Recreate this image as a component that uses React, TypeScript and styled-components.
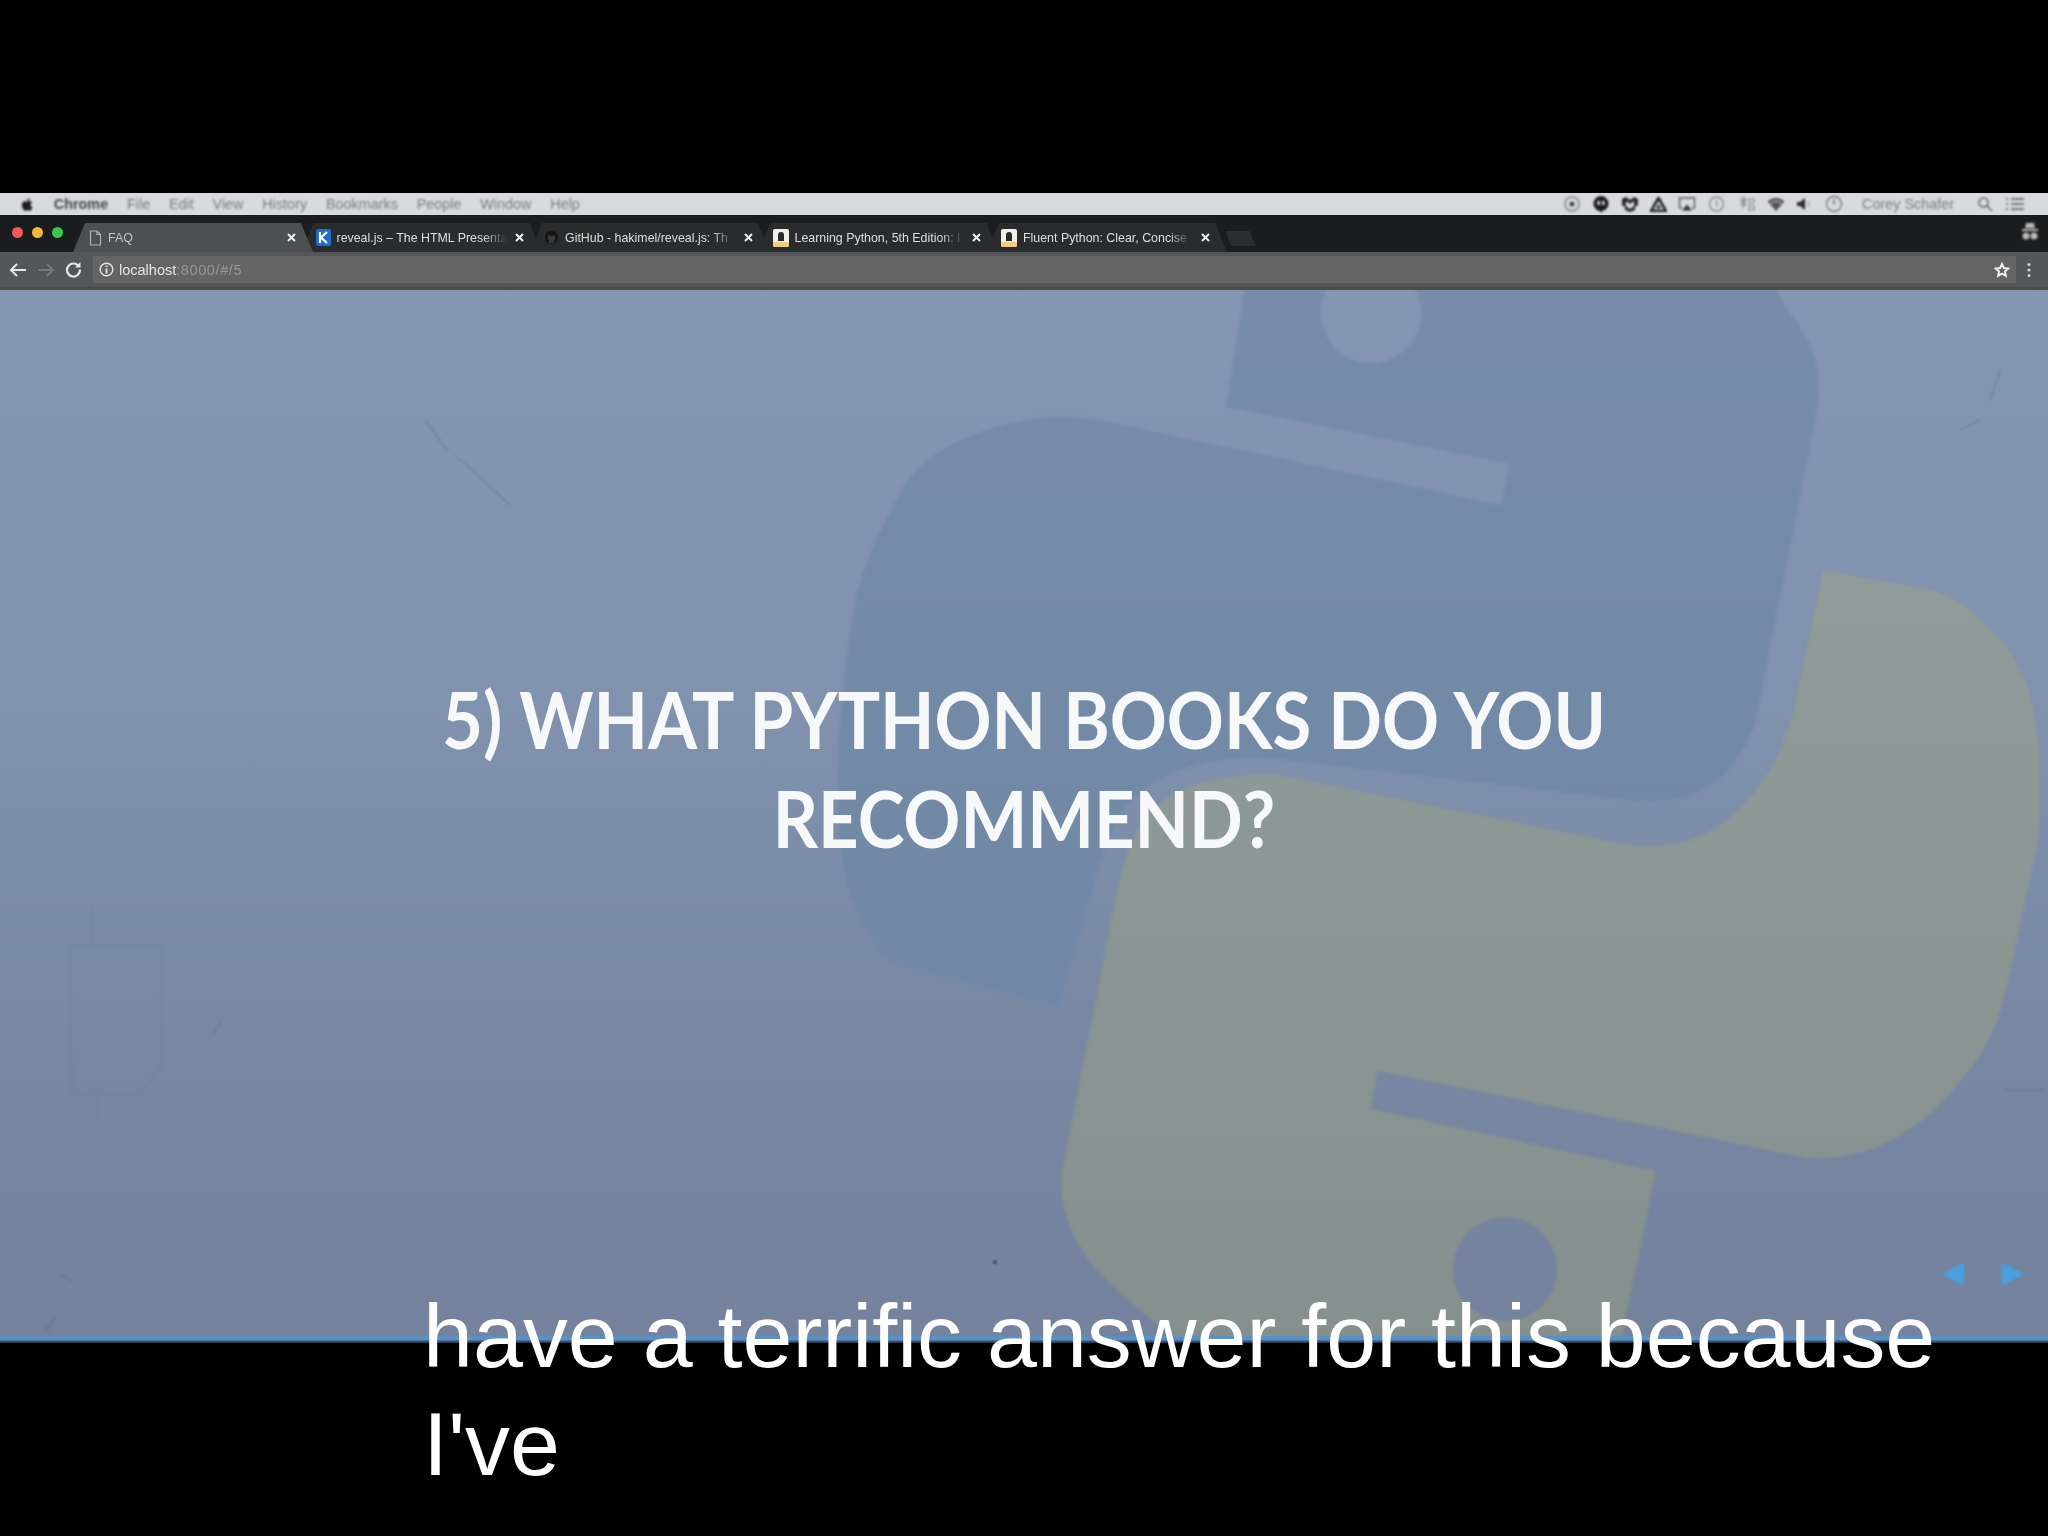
import React from 'react';
import styled, { createGlobalStyle } from 'styled-components';

const Global = createGlobalStyle`
  html, body { margin: 0; padding: 0; background: #000; }
  * { box-sizing: border-box; }
`;

const Page = styled.div`
  position: relative;
  width: 2048px;
  height: 1536px;
  display: flex;
  flex-direction: column;
  background: #000;
  overflow: hidden;
  font-family: "Liberation Sans", Arial, sans-serif;
`;
const Letterbox = styled.div<{ $h: number }>`
  height: ${(p) => p.$h}px;
  flex: none;
  background: #000;
`;
const MenuBar = styled.div`
  height: 22px;
  flex: none;
  display: flex;
  align-items: center;
  padding: 0 23px 0 20px;
  background: #d8dade;
  color: #797c80;
  font-size: 14.4px;
`;
const MenuBlur = styled.div`
  display: flex;
  align-items: center;
  filter: blur(0.8px);
`;
const MenuLeft = styled(MenuBlur)`
  gap: 18.800px;
`;
const AppName = styled.span`
  font-weight: 700;
  color: #45474a;
`;
const MenuRight = styled(MenuBlur)`
  margin-left: auto;
  gap: 11px;
  color: #555;
`;
const UserName = styled.span`
  margin: 0 12px 0 8px;
  color: #797c80;
`;
const TabStrip = styled.div`
  height: 37px;
  flex: none;
  display: flex;
  align-items: flex-end;
  background: #1b1c1e;
  position: relative;
`;
const Lights = styled.div`
  width: 73px;
  height: 100%;
  flex: none;
  display: flex;
  align-items: center;
  gap: 9px;
  padding: 0 0 2px 12px;
  filter: blur(0.7px);
`;
const Light = styled.span<{ $c: string }>`
  width: 11px;
  height: 11px;
  border-radius: 50%;
  background: ${(p) => p.$c};
`;
const Tab = styled.div<{ $active?: boolean }>`
  width: 240px;
  height: 29px;
  flex: none;
  margin-right: -11.500px;
  display: flex;
  align-items: center;
  gap: 6px;
  padding: 0 15px 0 ${(p) => (p.$active ? 16 : 14)}px;
  clip-path: polygon(0 100%, 5% 0, 95% 0, 100% 100%);
  background: ${(p) => (p.$active ? '#4e4f51' : '#2a2b2d')};
  color: #e4e4e4;
  font-size: 12.400px;
  position: relative;
  z-index: ${(p) => (p.$active ? 2 : 1)};
`;
const TabTitle = styled.span<{ $active?: boolean }>`
  flex: 1;
  overflow: hidden;
  white-space: nowrap;
  filter: blur(0.7px);
  color: ${(p) => (p.$active ? '#c4c4c4' : '#dedede')};
  mask-image: linear-gradient(90deg, #000 86%, transparent 100%);
`;
const TabClose = styled.span`
  flex: none;
  width: 14px;
  display: flex;
  justify-content: center;
  filter: blur(0.5px);
`;
const NewTab = styled.div`
  width: 30px;
  height: 15px;
  flex: none;
  margin: 0 0 6px 10px;
  clip-path: polygon(0 0, 80% 0, 100% 100%, 20% 100%);
  background: #2c2d2f;
  filter: blur(0.5px);
`;
const Incognito = styled.div`
  position: absolute;
  right: 9px;
  top: 7px;
  filter: blur(0.8px);
`;
const Toolbar = styled.div`
  height: 38px;
  flex: none;
  display: flex;
  align-items: center;
  padding: 0 6px 0 9px;
  background: #555658;
  border-bottom: 3px solid #4c4c4e;
`;
const NavIcons = styled.div`
  width: 84px;
  flex: none;
  display: flex;
  align-items: center;
  gap: 10px;
  filter: blur(0.6px);
`;
const Omnibox = styled.div`
  flex: 1;
  height: 27px;
  display: flex;
  align-items: center;
  gap: 5px;
  padding: 0 6px;
  background: #646464;
  font-size: 14.500px;
  color: #e6e6e6;
`;
const UrlIcon = styled.span`
  display: flex;
  filter: blur(0.6px);
`;
const Url = styled.span`
  filter: blur(0.6px);
`;
const UrlDim = styled.span`
  color: #979797;
  letter-spacing: 0.6px;
`;
const StarBox = styled.span`
  margin-left: auto;
  display: flex;
  filter: blur(0.6px);
`;
const MoreBox = styled.div`
  width: 26px;
  flex: none;
  display: flex;
  justify-content: center;
  filter: blur(0.6px);
`;
const Slide = styled.div`
  height: 1046px;
  flex: none;
  position: relative;
  display: flex;
  align-items: center;
  justify-content: center;
  padding-bottom: 88px;
  overflow: hidden;
  background: linear-gradient(180deg, #8596b2 0%, #8092ae 40%, #7888a3 70%, #74829e 100%);
`;
const Backdrop = styled.svg`
  position: absolute;
  left: 0;
  top: 0;
  width: 2048px;
  height: 1046px;
`;
const Title = styled.h1`
  position: relative;
  margin: 0;
  width: 1500px;
  text-align: center;
  color: #f7f8fa;
  font-family: Lato, "Noto Sans", sans-serif;
  font-weight: 700;
  font-size: 78px;
  line-height: 99px;
  transform: scaleX(0.906);
  filter: blur(0.6px);
`;
const Arrows = styled.div`
  position: absolute;
  right: 24px;
  bottom: 50px;
  display: flex;
  gap: 38px;
  filter: blur(0.8px);
`;
const Arrow = styled.span<{ $dir: 'left' | 'right' }>`
  width: 0;
  height: 0;
  border-top: 12px solid transparent;
  border-bottom: 12px solid transparent;
  ${(p) =>
    p.$dir === 'left'
      ? 'border-right: 22px solid #4a9fe0;'
      : 'border-left: 22px solid #4a9fe0;'}
`;
const Progress = styled.div`
  height: 7px;
  flex: none;
  background: #1c2430;
  filter: blur(0.6px);
`;
const ProgressFill = styled.div`
  height: 100%;
  background: linear-gradient(180deg, #5c8fc2 0, #5c8fc2 50%, #1c2a3a 100%);
`;
const Caption = styled.div`
  position: absolute;
  left: 423px;
  top: 1282px;
  width: 1560px;
  color: #fff;
  font-family: "Liberation Sans", Arial, sans-serif;
  font-size: 89.800px;
  line-height: 108px;
`;

const AppleIcon = () => (
  <svg width="15" height="17" viewBox="0 0 24 24" fill="#1d1d1d">
    <path d="M17.05 12.54c-.03-2.6 2.13-3.86 2.22-3.92-1.21-1.77-3.1-2.01-3.77-2.04-1.6-.16-3.13.94-3.94.94-.81 0-2.07-.92-3.4-.9-1.75.03-3.37 1.02-4.27 2.58-1.82 3.16-.47 7.84 1.31 10.4.87 1.26 1.9 2.67 3.26 2.62 1.31-.05 1.8-.85 3.38-.85 1.58 0 2.02.85 3.4.82 1.41-.02 2.3-1.28 3.16-2.54.99-1.46 1.4-2.87 1.43-2.94-.03-.01-2.75-1.05-2.78-4.17zM14.44 4.88c.72-.87 1.21-2.09 1.07-3.3-1.04.04-2.3.69-3.05 1.56-.67.77-1.25 2.01-1.1 3.2 1.16.09 2.35-.59 3.08-1.46z" />
  </svg>
);
const Status = ({ children }: { children: React.ReactNode }) => (
  <svg width="18" height="18" viewBox="0 0 18 18" fill="none" stroke="#555" strokeWidth="1.3">
    {children}
  </svg>
);
const FileIcon = () => (
  <svg width="13" height="16" viewBox="0 0 13 16" fill="none" stroke="#b4b4b4" strokeWidth="1.2" style={{ flex: 'none', filter: 'blur(0.5px)' }}>
    <path d="M1.5 1h6.5l3.5 3.5V15h-10z M8 1v3.5h3.5" />
  </svg>
);
const Close = () => (
  <svg width="9" height="9" viewBox="0 0 9 9" stroke="#eee" strokeWidth="2">
    <path d="M1 1l7 7M8 1l-7 7" />
  </svg>
);
const KFavicon = () => (
  <svg width="15" height="17" viewBox="0 0 15 17" style={{ flex: 'none', filter: 'blur(0.5px)' }}>
    <rect width="15" height="17" rx="2" fill="#1c6fc4" />
    <path d="M4 3v11M11 3L5 8.5l6 5.5" stroke="#fff" strokeWidth="2.2" fill="none" />
  </svg>
);
const GhFavicon = () => (
  <svg width="15" height="15" viewBox="0 0 15 15" style={{ flex: 'none', filter: 'blur(0.6px)' }}>
    <circle cx="7.5" cy="7.5" r="6.5" fill="#141414" />
    <path d="M5 13v-3c-1-.5-1.5-1.5-1.2-3l.4-2 1.6.7h3.4l1.6-.7.4 2c.3 1.5-.2 2.5-1.2 3v3" fill="#3a3a3a" />
  </svg>
);
const BookFavicon = () => (
  <svg width="16" height="18" viewBox="0 0 16 18" style={{ flex: 'none', filter: 'blur(0.5px)' }}>
    <rect width="16" height="18" rx="2" fill="#f1efe8" />
    <path d="M0 13h16v3a2 2 0 0 1-2 2H2a2 2 0 0 1-2-2z" fill="#f0cd84" />
    <path d="M5 12V6a3 3 0 0 1 6 0v6z" fill="#2b2b2b" />
  </svg>
);

const tabs = [
  { t: 'reveal.js – The HTML Presenta', i: <KFavicon /> },
  { t: 'GitHub - hakimel/reveal.js: Th', i: <GhFavicon /> },
  { t: 'Learning Python, 5th Edition: I', i: <BookFavicon /> },
  { t: 'Fluent Python: Clear, Concise', i: <BookFavicon /> },
];

const menus = ['File', 'Edit', 'View', 'History', 'Bookmarks', 'People', 'Window', 'Help'];

export default function App() {
  return (
    <Page>
      <Global />
      <Letterbox $h={193} />
      <MenuBar>
        <MenuLeft>
          <AppleIcon />
          <AppName>Chrome</AppName>
          {menus.map((m) => (
            <span key={m}>{m}</span>
          ))}
        </MenuLeft>
        <MenuRight>
          <Status>
            <circle cx="9" cy="9" r="7" stroke="#999" strokeWidth="2" />
            <circle cx="9" cy="9" r="2.5" fill="#444" stroke="none" />
          </Status>
          <svg width="18" height="19" viewBox="0 0 18 19">
            <path d="M9 1a7.500 7.500 0 0 0-7.500 7.500c0 4 3 7 6.500 7.500l1 2 1-2c3.500-.5 6.500-3.500 6.500-7.500A7.500 7.500 0 0 0 9 1z" fill="#1c1c1c" />
            <rect x="5.500" y="6" width="2.500" height="4" fill="#ddd" />
            <rect x="10" y="6" width="2.500" height="4" fill="#ddd" />
          </svg>
          <svg width="18" height="17" viewBox="0 0 18 17">
            <path d="M1 3l4-2 4 3 4-3 4 2v6l-3 2v3l-5 2-5-2v-3l-3-2z" fill="#2a2a2a" />
            <path d="M5 5l4 3 4-3v5l-4 3-4-3z" fill="#d9dbdf" />
          </svg>
          <svg width="17" height="15" viewBox="0 0 17 15">
            <path d="M8.500 1l7.500 13H1z" fill="none" stroke="#222" strokeWidth="2.600" strokeLinejoin="round" />
            <path d="M8.500 7l2.500 4.500H6z" fill="#222" />
          </svg>
          <Status>
            <path d="M4 13H1.500V3h15v10H14" />
            <path d="M9 9.500l5 6H4z" fill="#333" stroke="none" />
          </Status>
          <Status>
            <circle cx="9.500" cy="9" r="7" stroke="#888" />
            <path d="M9.500 5v4.500l2 1" stroke="#888" />
          </Status>
          <svg width="20" height="17" viewBox="0 0 20 17" fill="none" stroke="#888" strokeWidth="1.200">
            <path d="M4 3l6 5-3 3V1l3 3-6 5" />
            <path d="M13 3h5v4h-5zM13 10h5v4h-5z" />
          </svg>
          <svg width="18" height="14" viewBox="0 0 18 14">
            <path d="M0.500 4.500a12 12 0 0 1 17 0L9 14z" fill="#555" />
            <path d="M3 7a8.500 8.500 0 0 1 12 0" stroke="#d9dbdf" fill="none" />
          </svg>
          <svg width="18" height="14" viewBox="0 0 18 14">
            <path d="M1 5h3l5-4v12l-5-4H1z" fill="#2d2d2d" />
            <path d="M12 4.500a3.500 3.500 0 0 1 0 5" stroke="#888" fill="none" />
          </svg>
          <Status>
            <circle cx="9" cy="9" r="7.500" stroke="#777" />
            <path d="M9 4v5.500" stroke="#666" />
          </Status>
          <UserName>Corey Schafer</UserName>
          <svg width="16" height="16" viewBox="0 0 16 16" fill="none" stroke="#666" strokeWidth="1.600">
            <circle cx="6.500" cy="6.500" r="4.500" />
            <path d="M10 10l5 5" />
          </svg>
          <svg width="20" height="14" viewBox="0 0 20 14" stroke="#555" strokeWidth="1.600" style={{ marginLeft: 1 }}>
            <path d="M1 2h2M1 7h2M1 12h2M6 2h13M6 7h13M6 12h13" />
          </svg>
        </MenuRight>
      </MenuBar>
      <TabStrip>
        <Lights>
          <Light $c="#ef5a5c" />
          <Light $c="#f2b93e" />
          <Light $c="#3fc452" />
        </Lights>
        <Tab $active>
          <FileIcon />
          <TabTitle $active>FAQ</TabTitle>
          <TabClose>
            <Close />
          </TabClose>
        </Tab>
        {tabs.map((tab) => (
          <Tab key={tab.t}>
            {tab.i}
            <TabTitle>{tab.t}</TabTitle>
            <TabClose>
              <Close />
            </TabClose>
          </Tab>
        ))}
        <NewTab />
        <Incognito>
          <svg width="18" height="20" viewBox="0 0 18 20" fill="#bbb">
            <path d="M5 1h8l1 5H4z" />
            <rect x="1" y="7" width="16" height="2" />
            <circle cx="5" cy="14" r="3.500" />
            <circle cx="13" cy="14" r="3.500" />
          </svg>
        </Incognito>
      </TabStrip>
      <Toolbar>
        <NavIcons>
          <svg width="18" height="16" viewBox="0 0 18 16" fill="none" stroke="#e8e8e8" strokeWidth="2">
            <path d="M17 8H2M8 2L2 8l6 6" />
          </svg>
          <svg width="18" height="16" viewBox="0 0 18 16" fill="none" stroke="#787878" strokeWidth="1.800">
            <path d="M1 8h15M10 2l6 6-6 6" />
          </svg>
          <svg width="17" height="17" viewBox="0 0 17 17" fill="none" stroke="#e8e8e8" strokeWidth="2.200">
            <path d="M14 5.500A6.500 6.500 0 1 0 15 8.500" />
            <path d="M15.500 1v5.500H10" fill="#e8e8e8" stroke="none" />
          </svg>
        </NavIcons>
        <Omnibox>
          <UrlIcon>
            <svg width="15" height="15" viewBox="0 0 15 15" fill="none" stroke="#e6e6e6" strokeWidth="1.400">
              <circle cx="7.500" cy="7.500" r="6.300" />
              <path d="M7.500 6.500v5M7.500 3.500v1.500" strokeWidth="1.800" />
            </svg>
          </UrlIcon>
          <Url>
            localhost<UrlDim>:8000/#/5</UrlDim>
          </Url>
          <StarBox>
            <svg width="16" height="16" viewBox="0 0 24 24" fill="none" stroke="#eee" strokeWidth="3">
              <path d="M12 3l2.800 6 6.500.8-4.800 4.400 1.300 6.400L12 17.400l-5.800 3.200 1.300-6.400L2.700 9.800 9.200 9z" />
            </svg>
          </StarBox>
        </Omnibox>
        <MoreBox>
          <svg width="4" height="16" viewBox="0 0 4 16" fill="#d8d8d8">
            <circle cx="2" cy="2.500" r="1.500" />
            <circle cx="2" cy="8" r="1.500" />
            <circle cx="2" cy="13.500" r="1.500" />
          </svg>
        </MoreBox>
      </Toolbar>
      <Slide>
        <Backdrop viewBox="0 290 2048 1046">
          <defs>
            <linearGradient id="blue" x1="0" y1="0" x2="0" y2="1">
              <stop offset="0" stopColor="#768ca9" />
              <stop offset="1" stopColor="#7088a5" />
            </linearGradient>
            <linearGradient id="yellow" x1="0" y1="0" x2="0" y2="1">
              <stop offset="0" stopColor="#909b9a" />
              <stop offset="1" stopColor="#858f8e" />
            </linearGradient>
          </defs>
          <path
            fill="url(#blue)"
            fillRule="evenodd"
            filter="blur(1.5px)"
            d="M1246 280 L1226 407 L1509 464 L1501 505 L1118 424 C1085 417 1060 415 1047 417 C980 425 925 450 903 488 C880 530 866 560 858 589 C848 640 840 700 838 758 C836 820 840 860 850 893 C862 930 880 955 903 968 L1059 1007 L1095 880 C1105 845 1115 822 1126 806 C1140 790 1155 780 1174 772 C1205 760 1240 755 1270 758 L1628 800 C1650 803 1680 800 1700 792 C1730 775 1745 750 1755 724 L1819 400 C1820 370 1815 350 1803 332 C1790 312 1780 300 1771 280 Z M1371 263 a50 50 0 1 0 0.100 100 a50 50 0 1 0 -0.100 -100 Z"
          />
          <path
            fill="url(#yellow)"
            fillRule="evenodd"
            filter="blur(1.5px)"
            d="M1823 570 L1931 590 C1955 597 1970 608 1981 620 C1998 635 2008 648 2015 660 C2027 680 2033 700 2035 717 C2039 740 2040 755 2040 767 C2040 790 2040 815 2038 840 L2015 950 C2009 980 2003 1005 1995 1027 C1985 1050 1970 1072 1955 1087 C1940 1105 1925 1120 1908 1130 C1890 1143 1868 1152 1848 1155 C1835 1158 1820 1159 1808 1158 L1377 1071 L1371 1109 L1656 1171 L1620 1345 L1180 1345 C1130 1300 1095 1275 1079 1245 C1066 1220 1060 1200 1061 1177 L1118 887 C1125 855 1135 830 1150 812 C1170 792 1195 782 1222 779 C1240 775 1260 773 1278 775 L1628 845 C1650 848 1680 845 1700 836 C1722 826 1735 815 1748 800 C1765 780 1775 762 1781 747 C1790 725 1795 708 1798 690 Z M1505 1217 a52 52 0 1 0 0.100 104 a52 52 0 1 0 -0.100 -104 Z"
          />
          <g fill="none" stroke="#5c6a80" strokeWidth="1.500" opacity="0.4" filter="blur(1px)">
            <path d="M425 420l22 30M455 455l55 50" />
            <path d="M92 905v40M70 945h92v120l-20 28H72zM97 1090v30" opacity="0.3" />
            <path d="M222 1020l-8 14M60 1275l12 6M56 1315l-10 16" />
            <path d="M2005 1090h40M1990 400l10-30M1960 430l20-10" />
          </g>
          <circle cx="995" cy="1262" r="2.500" fill="#3f4a5c" opacity="0.6" />
        </Backdrop>
        <Title>
          5) WHAT PYTHON BOOKS DO YOU
          <br />
          RECOMMEND?
        </Title>
        <Arrows>
          <Arrow $dir="left" />
          <Arrow $dir="right" />
        </Arrows>
      </Slide>
      <Progress>
        <ProgressFill style={{ width: '100%' }} />
      </Progress>
      <Letterbox $h={190} />
      <Caption>have a terrific answer for this because I've</Caption>
    </Page>
  );
}
